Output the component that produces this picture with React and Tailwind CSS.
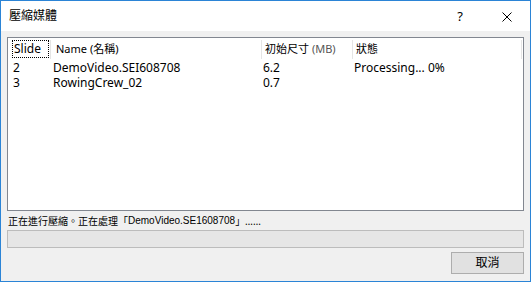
const rows = [
  { slide: '2', name: 'DemoVideo.SEI608708', size: '6.2', status: 'Processing... 0%' },
  { slide: '3', name: 'RowingCrew_02', size: '0.7', status: '' },
];

const font = { fontFamily: '"Noto Sans", "Noto Sans CJK TC", sans-serif' };

const App = () => {
  return (
    <div
      className="w-[531px] h-[282px] border border-[#2b84d6] flex flex-col bg-[#f0f0f0] text-black"
      style={font}
    >
      <div className="h-[30px] bg-white flex items-center pl-[8px] pr-[18px]">
        <span className="text-[12px] leading-none flex-1">壓縮媒體</span>
        <span className="text-[13px] leading-none mr-[39px]">?</span>
        <svg width="10" height="10" viewBox="0 0 10 10" className="mt-[1px]">
          <path d="M0.5 0.5 L9.5 9.5 M9.5 0.5 L0.5 9.5" stroke="#000" strokeWidth="1" fill="none" />
        </svg>
      </div>

      <div className="flex-1 flex flex-col px-[6px] pt-[6px] pb-[7px]">
        <div className="h-[174px] border border-[#828790] bg-white">
          <div className="h-[22px] flex items-center text-[11px]">
            <div className="w-[42px] h-full flex items-center pl-[4px] pr-[1px]">
              <span className="border border-dotted border-black px-[1px] h-[18px] flex items-center w-full text-[12px]">
                Slide
              </span>
            </div>
            <div className="w-px h-[19px] bg-[#e5e5e5]" />
            <div className="w-[210px] pl-[5px]">Name (名稱)</div>
            <div className="w-px h-[19px] bg-[#e5e5e5]" />
            <div className="w-[90px] pl-[3px]">
              初始尺寸 <span className="text-[#555]">(MB)</span>
            </div>
            <div className="w-px h-[19px] bg-[#e5e5e5]" />
            <div className="w-[168px] pl-[3px]">狀態</div>
            <div className="w-px h-[19px] bg-[#e5e5e5]" />
          </div>
          {rows.map((row) => (
            <div key={row.slide} className="h-[15px] flex items-center text-[12px] leading-[15px]">
              <div className="w-[43px] pl-[5px]">{row.slide}</div>
              <div className="w-[211px] pl-[2px]">{row.name}</div>
              <div className="w-[91px] pl-[1px]">{row.size}</div>
              <div className="pl-[1px]">{row.status}</div>
            </div>
          ))}
        </div>

        <div className="h-[19px] flex items-center pl-[1px] text-[10px] leading-none pt-[1px]">
          正在進行壓縮。正在處理「
          <span style={{ fontFamily: '"Liberation Sans", sans-serif' }}>DemoVideo.SE1608708</span>
          」……
        </div>

        <div className="h-[18px] border border-[#bcbcbc] bg-[#e6e6e6]" />

        <div className="flex justify-end mt-[4px]">
          <button className="w-[73px] h-[22px] border border-[#adadad] bg-[#e1e1e1] text-[12px] leading-none">
            取消
          </button>
        </div>
      </div>
    </div>
  );
};

export default App;
